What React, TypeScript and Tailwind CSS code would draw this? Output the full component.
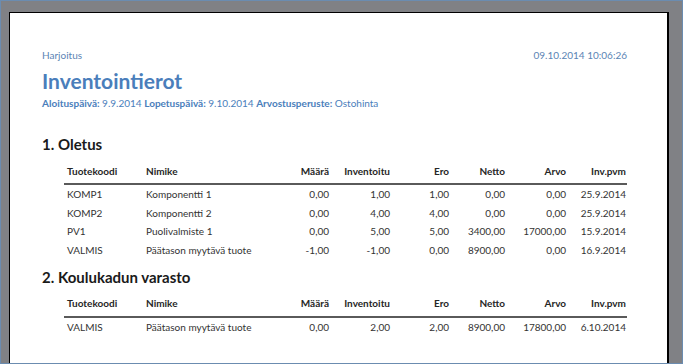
import React from "react";

const sections = [
  {
    title: "1. Oletus",
    rows: [
      ["KOMP1", "Komponentti 1", "0,00", "1,00", "1,00", "0,00", "0,00", "25.9.2014"],
      ["KOMP2", "Komponentti 2", "0,00", "4,00", "4,00", "0,00", "0,00", "25.9.2014"],
      ["PV1", "Puolivalmiste 1", "0,00", "5,00", "5,00", "3400,00", "17000,00", "15.9.2014"],
      ["VALMIS", "Päätason myytävä tuote", "-1,00", "-1,00", "0,00", "8900,00", "0,00", "16.9.2014"],
    ],
  },
  {
    title: "2. Koulukadun varasto",
    rows: [["VALMIS", "Päätason myytävä tuote", "0,00", "2,00", "2,00", "8900,00", "17800,00", "6.10.2014"]],
  },
];

const headers = ["Tuotekoodi", "Nimike", "Määrä", "Inventoitu", "Ero", "Netto", "Arvo", "Inv.pvm"];

const gridCols = "grid grid-cols-[79px_139px_50px_61px_59px_56px_61px_60px]";

const Cell = ({ i, children, bold }: { i: number; children: React.ReactNode; bold?: boolean }) => (
  <div className={`px-[3px] whitespace-nowrap ${i < 2 ? "text-left" : "text-right"} ${bold ? "font-bold text-[#262626]" : ""}`}>
    {children}
  </div>
);

const App = () => {
  return (
    <div
      className="w-[683px] h-[364px] overflow-hidden border border-[#6b8cb0] bg-[#808185] pl-[8px] pt-[11px] pr-[13px]"
      style={{ fontFamily: "Lato, 'Open Sans', sans-serif" }}
    >
      <div className="h-[400px] bg-white border-l border-t border-black border-r-2 pl-[32px] pr-[40px] pt-[31px]">
        <div className="flex justify-between text-[10px] text-[#5b84b4] leading-[22px]">
          <span>Harjoitus</span>
          <span>09.10.2014 10:06:26</span>
        </div>
        <h1 className="text-[21px] font-bold text-[#4a7ebb] leading-[26px] mt-[2px]">Inventointierot</h1>
        <p className="text-[10px] text-[#4a7ebb] mt-[2px] leading-[14px]">
          <b>Aloituspäivä:</b> 9.9.2014 <b>Lopetuspäivä:</b> 9.10.2014 <b>Arvostusperuste:</b> Ostohinta
        </p>
        {sections.map((s, si) => (
          <div key={si} className={si === 0 ? "mt-[24px]" : "mt-[7px]"}>
            <h2 className="text-[15px] font-bold text-[#1a1a1a] leading-[20px]">{s.title}</h2>
            <div className="ml-[22px] mt-[9px] text-[10px] text-[#333]">
              <div className={`${gridCols} h-[22px] pb-[4px] items-center border-b-2 border-[#5a5a5a]`}>
                {headers.map((h, i) => (
                  <Cell key={i} i={i} bold>
                    {h}
                  </Cell>
                ))}
              </div>
              {s.rows.map((r, ri) => (
                <div key={ri} className={`${gridCols} h-[18.7px] items-center`}>
                  {r.map((c, i) => (
                    <Cell key={i} i={i}>
                      {c}
                    </Cell>
                  ))}
                </div>
              ))}
            </div>
          </div>
        ))}
      </div>
    </div>
  );
};

export default App;
